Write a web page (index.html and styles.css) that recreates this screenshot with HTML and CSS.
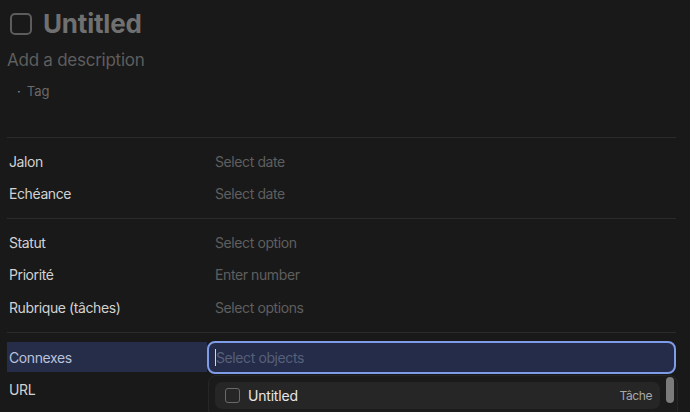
FILE: index.html
```html
<!DOCTYPE html>
<html lang="fr">
<head>
    <meta charset="UTF-8">
    <meta name="viewport" content="width=device-width, initial-scale=1.0">
    <title>Untitled</title>
    <link rel="stylesheet" href="styles.css">
</head>
<body>
    <div class="page">
        <!-- En-tête de l'objet -->
        <div class="header">
            <div class="title-row">
                <span class="checkbox big"></span>
                <h1 class="title">Untitled</h1>
            </div>
            <p class="description">Add a description</p>
            <div class="tags">
                <span class="tag-dot">·</span>
                <span>Tag</span>
            </div>
        </div>

        <!-- Dates -->
        <div class="section">
            <div class="row">
                <div class="label">Jalon</div>
                <div class="value">Select date</div>
            </div>
            <div class="row">
                <div class="label">Echéance</div>
                <div class="value">Select date</div>
            </div>
        </div>

        <!-- Suivi -->
        <div class="section">
            <div class="row">
                <div class="label">Statut</div>
                <div class="value">Select option</div>
            </div>
            <div class="row">
                <div class="label">Priorité</div>
                <div class="value">Enter number</div>
            </div>
            <div class="row">
                <div class="label">Rubrique (tâches)</div>
                <div class="value">Select options</div>
            </div>
        </div>

        <!-- Relations -->
        <div class="section last">
            <div class="row active">
                <div class="label">Connexes</div>
                <div class="value picker">
                    <div class="search">
                        <span class="caret"></span>
                        <span>Select objects</span>
                    </div>
                    <div class="dropdown">
                        <div class="option">
                            <span class="checkbox small"></span>
                            <span class="option-name">Untitled</span>
                            <span class="option-type">Tâche</span>
                        </div>
                        <div class="scroll-thumb"></div>
                    </div>
                </div>
            </div>
            <div class="row">
                <div class="label">URL</div>
                <div class="value"></div>
            </div>
        </div>
    </div>
</body>
</html>
```

FILE: styles.css
```css
* {
    margin: 0;
    padding: 0;
    box-sizing: border-box;
}

body {
    font-family: Inter, 'Noto Sans', sans-serif;
    background: #191919;
    color: #d4d4d4;
    overflow: hidden;
    height: 412px;
}

.page {
    width: 676px;
    padding-left: 7px;
}

/* Header */
.header {
    padding-top: 11px;
    height: 137px;
}

.title-row {
    display: flex;
    align-items: center;
    gap: 11px;
    padding-left: 3px;
}

.checkbox {
    display: inline-block;
    border: 2px solid #5c5c5c;
    flex-shrink: 0;
}

.checkbox.big {
    width: 22px;
    height: 22px;
    border-radius: 5px;
}

.title {
    font-size: 26px;
    font-weight: 700;
    color: #707070;
    line-height: 26px;
    letter-spacing: -0.2px;
}

.description {
    margin-top: 11px;
    font-size: 17px;
    color: #5e5e5e;
    line-height: 24px;
    letter-spacing: -0.25px;
}

.tags {
    display: flex;
    align-items: center;
    gap: 6px;
    margin-top: 10px;
    padding-left: 10px;
    font-size: 13px;
    color: #6a6a6a;
    line-height: 18px;
}

.tag-dot {
    font-size: 13px;
    color: #8a8a8a;
}

/* Property sections */
.section {
    border-top: 1px solid #2b2b2b;
    padding: 7px 0 8px;
}

.section.last {
    padding-top: 8px;
    padding-bottom: 0;
}

.row {
    display: grid;
    grid-template-columns: 200px 1fr;
    height: 32.5px;
    align-items: center;
    font-size: 14px;
    letter-spacing: -0.4px;
}

.label {
    padding-left: 2px;
    color: #d2d2d2;
    height: 100%;
    display: flex;
    align-items: center;
}

.value {
    padding-left: 8px;
    color: #5f5f5f;
}

/* Connexes, ouvert */
.row.active {
    height: 33px;
}

.row.active .label {
    background: #262d48;
    color: #b8c2dc;
    height: 30px;
}

.picker {
    position: relative;
    padding-left: 0;
    height: 33px;
}

.search {
    height: 33px;
    background: #252c49;
    border: 2px solid #7f9ce8;
    border-radius: 8px;
    display: flex;
    align-items: center;
    padding-left: 6px;
    color: #566079;
}

.caret {
    width: 1px;
    height: 17px;
    background: #cfd6ea;
}

.dropdown {
    position: absolute;
    top: 34px;
    left: 1px;
    right: -2px;
    height: 60px;
    background: #1b1b1b;
    border: 1px solid #262626;
    border-radius: 8px 8px 0 0;
    padding: 6px 17px 0 6px;
}

.option {
    display: flex;
    align-items: center;
    height: 27px;
    background: #262626;
    border-radius: 7px;
    padding: 0 8px 0 10px;
}

.checkbox.small {
    width: 15px;
    height: 15px;
    border-radius: 3px;
    border: 1.5px solid #6a6a6a;
}

.option-name {
    margin-left: 8px;
    color: #e6e6e6;
    font-size: 14px;
    letter-spacing: -0.2px;
}

.option-type {
    margin-left: auto;
    font-size: 12px;
    color: #a8a8a8;
}

.scroll-thumb {
    position: absolute;
    top: 1px;
    right: 3px;
    width: 8px;
    height: 26px;
    border-radius: 4px;
    background: #7b7b7b;
}
```
